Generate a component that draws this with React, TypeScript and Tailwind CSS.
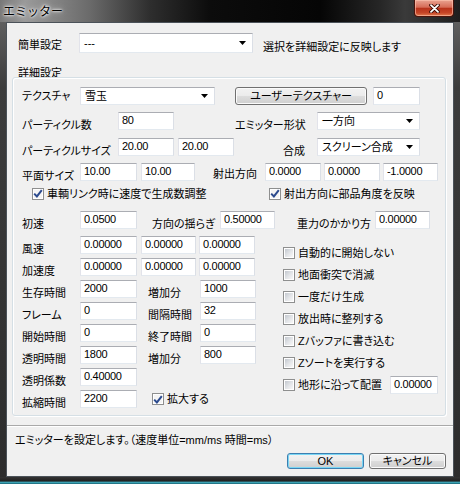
import React from "react";

type P = { children?: React.ReactNode; c?: string };

function L({ children, c = "" }: P) {
  return (
    <div className={`shrink-0 whitespace-nowrap text-[11px] leading-[14px] ${c}`}>
      {children}
    </div>
  );
}

function I({ children, c = "" }: P) {
  return (
    <div
      className={`shrink-0 h-[18px] bg-white border border-t-[#abadb3] border-l-[#e2e3ea] border-r-[#dbdfe6] border-b-[#e3e9ef] pl-[3px] pt-[1px] text-[11px] leading-[12px] tracking-[-0.3px] whitespace-nowrap overflow-hidden ${c}`}
    >
      {children}
    </div>
  );
}

function Combo({ children, c = "" }: P) {
  return (
    <div
      className={`shrink-0 flex items-center bg-white border border-t-[#abadb3] border-l-[#e2e3ea] border-r-[#dbdfe6] border-b-[#e3e9ef] ${c}`}
    >
      <span className="flex-1 pl-[4px] text-[11px] leading-[14px] whitespace-nowrap">{children}</span>
      <svg width="7" height="4" viewBox="0 0 7 4" className="mr-[6px] shrink-0">
        <polygon points="0,0 7,0 3.5,4" fill="#000" />
      </svg>
    </div>
  );
}

function Cb({ children, c = "", checked = false }: P & { checked?: boolean }) {
  return (
    <div className={`flex items-center shrink-0 whitespace-nowrap text-[11px] leading-[14px] ${c}`}>
      <div className="w-[12px] h-[12px] border border-[#8e8f8f] bg-white p-[1px] shrink-0 mr-[3px]">
        <div
          className={`w-full h-full flex items-center justify-center ${
            checked
              ? "bg-[#f4f4f4]"
              : "bg-[linear-gradient(135deg,#c3c8cf_0%,#e4e6e9_55%,#f8f8f8_100%)]"
          }`}
        >
          {checked && (
            <svg width="10" height="9" viewBox="0 0 10 9" className="shrink-0">
              <path d="M1.2 4.6 L3.9 7.4 L8.8 1.2" fill="none" stroke="#2b4a8e" strokeWidth="2" />
            </svg>
          )}
        </div>
      </div>
      {children}
    </div>
  );
}

function Btn({ children, c = "", def = false }: P & { def?: boolean }) {
  return (
    <div
      className={`shrink-0 flex items-center justify-center rounded-[3px] border text-[11px] leading-[12px] whitespace-nowrap bg-[linear-gradient(180deg,#f2f2f2_0%,#ebebeb_49%,#dddddd_50%,#cfcfcf_100%)] ${
        def
          ? "border-[#3c7fb1] shadow-[inset_0_0_0_1px_#79d6f4]"
          : "border-[#707070] shadow-[inset_0_0_0_1px_#fbfbfb]"
      } ${c}`}
    >
      {children}
    </div>
  );
}

export default function App() {
  return (
    <div className="w-[460px] h-[484px] flex flex-col overflow-hidden text-black bg-[linear-gradient(180deg,#6a6a6a_0%,#3c3c3c_18%,#2c2c2c_100%)] [font-family:'Liberation_Sans','Noto_Sans_CJK_JP',sans-serif] [font-feature-settings:'palt']">
      {/* title bar */}
      <div className="h-[22px] shrink-0 flex items-start bg-[linear-gradient(90deg,#787878_0px,#9a9a9a_25px,#6a6a6a_90px,#2e2e2e_150px,#0c0c0c_210px,#050505_320px,#262626_380px,#3a3a3a_405px,#1e1e1e_460px)]">
        <div className="ml-[3px] mt-[5px] text-[12px] leading-[14px] [font-feature-settings:normal] [text-shadow:0_0_6px_#fff,0_0_3px_#fff,0_0_2px_#fff]">
          エミッター
        </div>
        <div className="ml-auto mr-[6px] w-[40px] h-[17px] flex items-center justify-center rounded-b-[4px] border border-t-0 border-[#4a140c] bg-[linear-gradient(180deg,#e9a391_0%,#d66c57_45%,#b8331b_52%,#c54527_80%,#e27b4e_100%)] shadow-[inset_0_0_0_1px_rgba(255,200,180,0.6)]">
          <svg width="11" height="9" viewBox="0 0 11 9">
            <path d="M2 1.2 L9 7.8 M9 1.2 L2 7.8" stroke="#3a0c05" strokeWidth="3.6" strokeLinecap="round" />
            <path d="M2 1.2 L9 7.8 M9 1.2 L2 7.8" stroke="#ffffff" strokeWidth="1.8" strokeLinecap="round" />
          </svg>
        </div>
      </div>

      {/* client */}
      <div className="mx-[6px] h-[455px] shrink-0 border border-[#4b5259] bg-[#f0f0f0] flex flex-col">
        {/* 簡単設定 */}
        <div className="flex items-center h-[20px] mt-[10px]">
          <L c="ml-[11px] w-[61px] mt-[4px]">簡単設定</L>
          <Combo c="w-[174px] h-[20px]">---</Combo>
          <L c="ml-[10px] mt-[8px]">選択を詳細設定に反映します</L>
        </div>

        <L c="mt-[13px] ml-[11px]">詳細設定</L>

        {/* group box */}
        <div className="-mt-[3px] ml-[5px] w-[434px] h-[339px] shrink-0 border border-[#d5dfe5] rounded-[3px] shadow-[inset_1px_1px_0_#ffffff,1px_1px_0_#ffffff] flex flex-col pl-[9px]">
          {/* テクスチャ */}
          <div className="flex items-center h-[18px] mt-[9px]">
            <L c="w-[58px]">テクスチャ</L>
            <Combo c="w-[135px] h-[18px]">雪玉</Combo>
            <Btn c="ml-[20px] w-[132px] h-[18px]">ユーザーテクスチャー</Btn>
            <I c="ml-[6px] w-[47px]">0</I>
          </div>

          {/* パーティクル数 */}
          <div className="flex items-center h-[18px] mt-[7px]">
            <L c="w-[96px] mt-[8px]">パーティクル数</L>
            <I c="w-[56px]">80</I>
            <L c="ml-[61px] w-[82px] mt-[8px]">エミッター形状</L>
            <Combo c="w-[103px] h-[18px]">一方向</Combo>
          </div>

          {/* パーティクルサイズ */}
          <div className="flex items-center h-[18px] mt-[8px]">
            <L c="w-[96px] mt-[8px]">パーティクルサイズ</L>
            <I c="w-[56px]">20.00</I>
            <I c="ml-[4px] w-[56px]">20.00</I>
            <L c="ml-[49px] w-[34px] mt-[8px]">合成</L>
            <Combo c="w-[103px] h-[18px]">スクリーン合成</Combo>
          </div>

          {/* 平面サイズ */}
          <div className="flex items-center h-[18px] mt-[7px]">
            <L c="w-[58px] mt-[8px]">平面サイズ</L>
            <I c="w-[57px]">10.00</I>
            <I c="ml-[4px] w-[54px]">10.00</I>
            <L c="ml-[18px] w-[52px] mt-[4px]">射出方向</L>
            <I c="w-[56px]">0.0000</I>
            <I c="ml-[3px] w-[56px]">0.0000</I>
            <I c="ml-[3px] w-[55px]">-1.0000</I>
          </div>

          {/* checkboxes */}
          <div className="flex items-center h-[13px] mt-[6px]">
            <Cb checked c="ml-[10px] w-[237px]">車輌リンク時に速度で生成数調整</Cb>
            <Cb checked>射出方向に部品角度を反映</Cb>
          </div>

          {/* 初速 */}
          <div className="flex items-center h-[18px] mt-[11px]">
            <L c="w-[58px] mt-[8px]">初速</L>
            <I c="w-[57px]">0.0500</I>
            <L c="ml-[15px] w-[68px] mt-[8px]">方向の揺らぎ</L>
            <I c="w-[55px]">0.50000</I>
            <L c="ml-[22px] w-[78px] mt-[8px]">重力のかかり方</L>
            <I c="w-[55px]">0.00000</I>
          </div>

          {/* lower section */}
          <div className="flex mt-[7px]">
            <div className="w-[261px] shrink-0 flex flex-col gap-[4px]">
              <div className="flex items-center h-[18px]">
                <L c="w-[58px] mt-[8px]">風速</L>
                <I c="w-[57px]">0.00000</I>
                <I c="ml-[4px] w-[55px]">0.00000</I>
                <I c="ml-[3px] w-[56px]">0.00000</I>
              </div>
              <div className="flex items-center h-[18px]">
                <L c="w-[58px] mt-[8px]">加速度</L>
                <I c="w-[57px]">0.00000</I>
                <I c="ml-[4px] w-[55px]">0.00000</I>
                <I c="ml-[3px] w-[56px]">0.00000</I>
              </div>
              <div className="flex items-center h-[18px]">
                <L c="w-[58px] mt-[8px]">生存時間</L>
                <I c="w-[57px]">2000</I>
                <L c="ml-[11px] w-[52px] mt-[8px]">増加分</L>
                <I c="w-[56px]">1000</I>
              </div>
              <div className="flex items-center h-[18px]">
                <L c="w-[58px] mt-[8px]">フレーム</L>
                <I c="w-[57px]">0</I>
                <L c="ml-[11px] w-[52px] mt-[8px]">間隔時間</L>
                <I c="w-[56px]">32</I>
              </div>
              <div className="flex items-center h-[18px]">
                <L c="w-[58px] mt-[8px]">開始時間</L>
                <I c="w-[57px]">0</I>
                <L c="ml-[11px] w-[52px] mt-[8px]">終了時間</L>
                <I c="w-[56px]">0</I>
              </div>
              <div className="flex items-center h-[18px]">
                <L c="w-[58px] mt-[8px]">透明時間</L>
                <I c="w-[57px]">1800</I>
                <L c="ml-[11px] w-[52px] mt-[8px]">増加分</L>
                <I c="w-[56px]">800</I>
              </div>
              <div className="flex items-center h-[18px]">
                <L c="w-[58px] mt-[8px]">透明係数</L>
                <I c="w-[57px]">0.40000</I>
              </div>
              <div className="flex items-center h-[18px]">
                <L c="w-[58px] mt-[8px]">拡縮時間</L>
                <I c="w-[57px]">2200</I>
                <Cb checked c="ml-[15px]">拡大する</Cb>
              </div>
            </div>

            <div className="flex-1 flex flex-col mt-[6px]">
              <div className="flex items-center h-[22px]"><Cb>自動的に開始しない</Cb></div>
              <div className="flex items-center h-[22px]"><Cb>地面衝突で消滅</Cb></div>
              <div className="flex items-center h-[22px]"><Cb>一度だけ生成</Cb></div>
              <div className="flex items-center h-[22px]"><Cb>放出時に整列する</Cb></div>
              <div className="flex items-center h-[22px]"><Cb>Zバッファに書き込む</Cb></div>
              <div className="flex items-center h-[22px]"><Cb>Zソートを実行する</Cb></div>
              <div className="flex items-center h-[22px]">
                <Cb>地形に沿って配置</Cb>
                <I c="ml-auto mr-[7px] w-[48px]">0.00000</I>
              </div>
            </div>
          </div>
        </div>

        {/* separator */}
        <div className="mt-[9px] h-[2px] shrink-0 border-t border-t-[#a9a9a9] border-b border-b-white" />

        <L c="ml-[8px] mt-[6px]">エミッターを設定します。（速度単位=mm/ms 時間=ms）</L>

        <div className="flex justify-end mt-[6px] pr-[7px]">
          <Btn def c="w-[77px] h-[16px]">OK</Btn>
          <Btn c="ml-[5px] w-[77px] h-[16px]">キャンセル</Btn>
        </div>
      </div>

      <div className="flex-1 bg-[linear-gradient(180deg,#333333_0%,#222222_55%,#3fb4c8_82%,#0e4f5e_100%)]" />
    </div>
  );
}
